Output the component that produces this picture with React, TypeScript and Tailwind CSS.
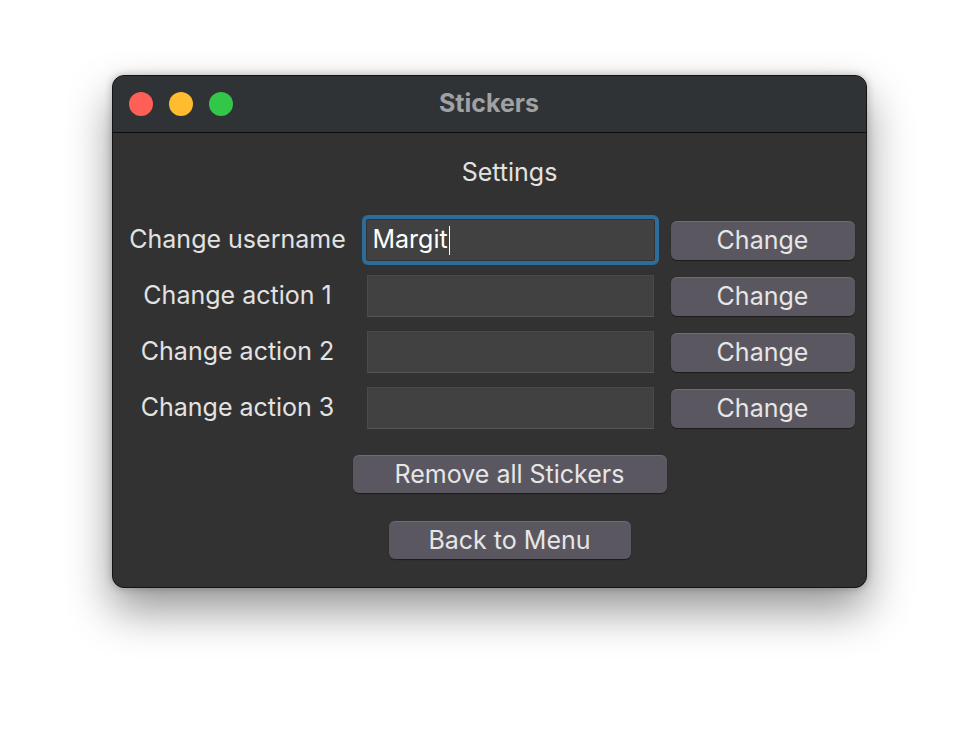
const rows = [
  { label: 'Change username', value: 'Margit', focused: true },
  { label: 'Change action 1', value: '' },
  { label: 'Change action 2', value: '' },
  { label: 'Change action 3', value: '' },
];

const TkButton = ({ children, className }: { children: string; className: string }) => (
  <button className={`flex items-center justify-center rounded-[6px] bg-[#5a5760] text-[25px] leading-none text-[#e6e6e6] shadow-[0_1px_1px_rgba(0,0,0,0.45),inset_0_1px_0_rgba(255,255,255,0.12)] ${className}`}>
    {children}
  </button>
);

const App = (): JSX.Element => {
  return (
    <div
      className="flex min-h-[736px] w-full justify-center bg-white pt-[75px]"
      style={{ fontFamily: 'Inter, "Open Sans", sans-serif' }}
    >
      <div className="flex h-[513px] w-[755px] flex-col overflow-hidden rounded-[12px] border border-[#141414] bg-[#323232] shadow-[0_22px_45px_rgba(0,0,0,0.42),0_0_8px_rgba(0,0,0,0.25)]">
        {/* title bar */}
        <div className="relative flex h-[57px] items-center border-b border-[#0e0e0e] bg-[#303336] px-[16px]">
          <div className="flex gap-[16px]">
            <span className="h-[24px] w-[24px] rounded-full bg-[#fe5f57]" />
            <span className="h-[24px] w-[24px] rounded-full bg-[#febc2e]" />
            <span className="h-[24px] w-[24px] rounded-full bg-[#32c748]" />
          </div>
          <div className="absolute inset-0 flex items-center justify-center text-[25px] font-bold text-[#9fa1a3]">
            Stickers
          </div>
        </div>

        {/* content */}
        <div className="flex flex-col items-center pt-[25px]">
          <div className="h-[28px] pl-[41px] text-[25px] leading-[28px] text-[#e2e2e2]">Settings</div>

          <div className="mt-[26px] flex w-full flex-col">
            {rows.map((r) => (
              <div key={r.label} className="flex h-[56px] items-center">
                <div className="w-[250px] text-center text-[25px] text-[#e2e2e2]">{r.label}</div>
                <div className="ml-[4px] w-[287px]">
                  {r.focused ? (
                    <div className="-m-[5px] rounded-[6px] border-[4px] border-[#2c6d9b] p-px">
                      <div className="flex h-[40px] items-center bg-[#414141] pl-[6px] text-[25px] text-white">
                        {r.value}
                        <span className="ml-px h-[29px] w-[1.5px] bg-white" />
                      </div>
                    </div>
                  ) : (
                    <div className="h-[42px] border border-[#4a4a4a] border-b-[#555555] bg-[#414141]" />
                  )}
                </div>
                <TkButton className="ml-[17px] h-[39px] w-[184px]">Change</TkButton>
              </div>
            ))}
          </div>

          <div className="flex flex-col items-center pl-[41px]">
            <TkButton className="mt-[19px] h-[38px] w-[314px]">Remove all Stickers</TkButton>
            <TkButton className="mt-[28px] h-[38px] w-[242px]">Back to Menu</TkButton>
          </div>
        </div>
      </div>
    </div>
  );
};

export default App;
